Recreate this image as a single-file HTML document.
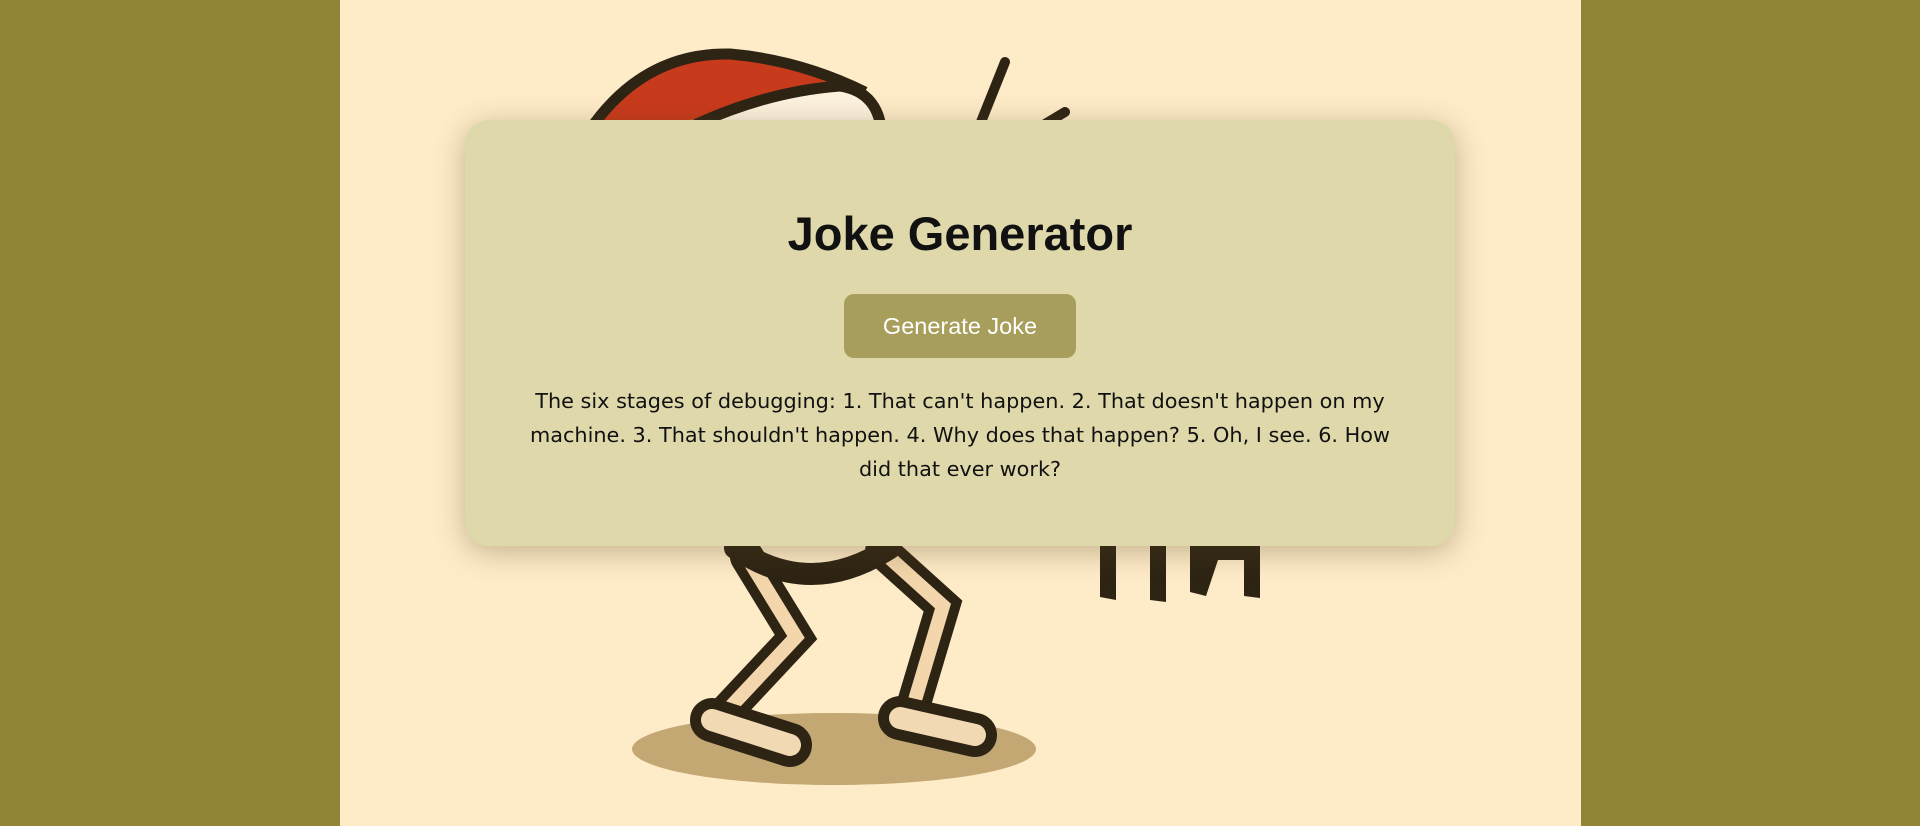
<!DOCTYPE html>
<html><head><meta charset="utf-8"><style>
html,body{margin:0;padding:0;width:1920px;height:826px;overflow:hidden;background:#918436;font-family:"Liberation Sans",sans-serif}
.center{position:absolute;left:340px;top:0;width:1241px;height:826px;background:#feebc8}
svg.art{position:absolute;left:0;top:0}
.card{position:absolute;left:465px;top:120px;width:990px;height:426px;background:#dfd8aa;border-radius:24px;box-shadow:0 6px 30px rgba(90,70,30,.35);text-align:center}
h1{margin:0;position:absolute;left:0;right:0;font-size:47px;font-weight:bold;color:#111;top:86px;font-family:"Liberation Sans",sans-serif}
.btn{position:absolute;left:379px;top:174px;width:232px;height:64px;background:#a89e5c;border-radius:10px;color:#fff;font-size:23.5px;line-height:64px}
.joke{position:absolute;left:55px;right:55px;top:264px;font-size:20.8px;line-height:34px;color:#111;font-family:"DejaVu Sans","Liberation Sans",sans-serif}
</style></head><body>
<div class="center"></div>
<svg class="art" width="1920" height="826" viewBox="0 0 1920 826">
<ellipse cx="834" cy="749" rx="202" ry="36" fill="#c4a874"/>
<g transform="translate(0,12)">
<path d="M585 125 Q640 40 730 42 Q800 48 865 80" fill="#c83a1c" stroke="#2e2414" stroke-width="11"/>
<path d="M680 120 Q760 80 840 74 Q880 80 882 125" fill="#fdf2de" stroke="#2e2414" stroke-width="11"/>
<path d="M1005 50 L975 125" stroke="#2e2414" stroke-width="10" stroke-linecap="round"/>
<path d="M1065 100 L1040 115" stroke="#2e2414" stroke-width="10" stroke-linecap="round"/>
</g>
<g stroke="#2e2414" stroke-linecap="round" fill="none">
<path d="M747 557 L796 637 L722 716" stroke-width="34"/>
<path d="M882 551 L943 606 L912 710" stroke-width="34"/>
<path d="M747 557 L796 637 L722 716" stroke="#f4d6ac" stroke-width="14"/>
<path d="M882 551 L943 606 L912 710" stroke="#f4d6ac" stroke-width="14"/>
<path d="M735 548 Q810 600 890 548" stroke-width="22"/>
<path d="M712 720 L790 745" stroke-width="44"/>
<path d="M900 718 L975 735" stroke-width="44"/>
<path d="M712 720 L790 745" stroke="#f1d9b4" stroke-width="22"/>
<path d="M900 718 L975 735" stroke="#f1d9b4" stroke-width="22"/>
</g>
<g fill="#2e2414">
<path d="M1100 546 h16 v54 l-16 -3z"/>
<path d="M1150 546 h16 v56 l-16 -2z"/>
<path d="M1190 546 h70 v52 l-16 -2 v-36 h-26 l-12 36 l-16 -4z"/>
</g>
</svg>
<div class="card">
<h1>Joke Generator</h1>
<div class="btn">Generate Joke</div>
<div class="joke">The six stages of debugging: 1. That can't happen. 2. That doesn't happen on my machine. 3. That shouldn't happen. 4. Why does that happen? 5. Oh, I see. 6. How did that ever work?</div>
</div>
</body></html>
